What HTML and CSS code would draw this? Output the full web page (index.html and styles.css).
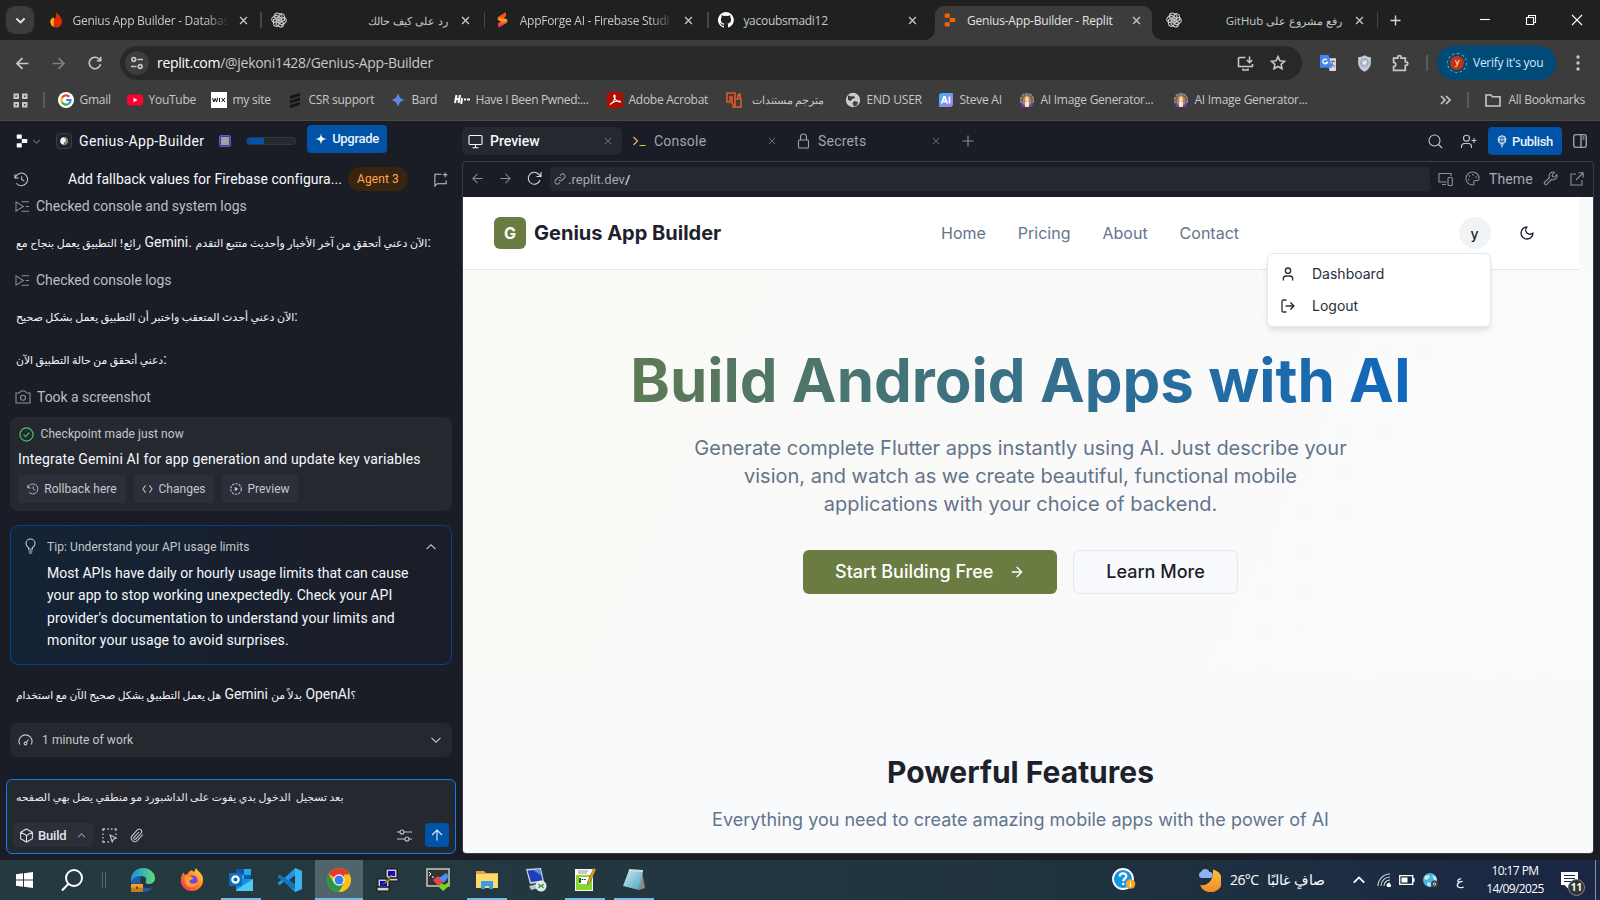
FILE: index.html
```html
<!DOCTYPE html>
<html lang="en">
<head>
<meta charset="utf-8">
<title>Genius-App-Builder - Replit</title>
<link rel="stylesheet" href="styles.css">
</head>
<body>
<svg class="defs" width="0" height="0" aria-hidden="true">
  <defs>
    <linearGradient id="g-flame" x1="0" x2="1"><stop offset="0" stop-color="#ffc400"/><stop offset=".45" stop-color="#ff9100"/><stop offset=".5" stop-color="#dd2c00"/><stop offset="1" stop-color="#dd2c00"/></linearGradient>
    <linearGradient id="g-studio" x1="0" y1="0" x2="0" y2="1"><stop offset="0" stop-color="#f4511e"/><stop offset=".3" stop-color="#f4511e"/><stop offset=".5" stop-color="#ffb300"/><stop offset=".75" stop-color="#f0405a"/><stop offset="1" stop-color="#e91e8c"/></linearGradient>
    <linearGradient id="g-bard" x1="0" x2="1"><stop offset="0" stop-color="#8c7ad8"/><stop offset="1" stop-color="#2f97ea"/></linearGradient>
    <linearGradient id="g-steve" x1="0" y1="0" x2="1" y2="1"><stop offset="0" stop-color="#35b5f5"/><stop offset="1" stop-color="#b07af5"/></linearGradient>
    <linearGradient id="g-edge" x1="0" x2="1"><stop offset="0" stop-color="#1b8fe0"/><stop offset="1" stop-color="#5fdc7a"/></linearGradient>
    <linearGradient id="g-fox" x1="1" y1="0" x2="0" y2="1"><stop offset="0" stop-color="#ffe14a"/><stop offset=".45" stop-color="#ff8a1f"/><stop offset="1" stop-color="#f5206b"/></linearGradient>
    <linearGradient id="g-moon" x1="0" y1="0" x2="0" y2="1"><stop offset="0" stop-color="#f8c63a"/><stop offset="1" stop-color="#f08a2c"/></linearGradient>
    <linearGradient id="g-note" x1="0" x2="1" y2="1"><stop offset="0" stop-color="#c9edf5"/><stop offset="1" stop-color="#4aa2bb"/></linearGradient>
    <symbol id="close" viewBox="0 0 10 10"><path d="M1.200 1.200l7.600 7.600M8.800 1.200L1.200 8.800"/></symbol>
    <symbol id="down" viewBox="0 0 12 12"><path d="M1.500 3.800L6 8.200l4.500-4.400"/></symbol>
    <symbol id="up" viewBox="0 0 12 12"><path d="M1.500 8.200L6 3.800l4.500 4.400"/></symbol>
    <symbol id="left" viewBox="0 0 12 12"><path d="M11.500 6H1M6 1L1 6l5 5"/></symbol>
    <symbol id="right" viewBox="0 0 12 12"><path d="M.5 6H11M6 1l5 5-5 5"/></symbol>
    <symbol id="plus" viewBox="0 0 12 12"><path d="M6 .5v11M.5 6h11"/></symbol>
    <symbol id="knot" viewBox="0 0 16 16"><g><path d="M8 8V3.200a2.900 2.900 0 0 1 5.500 1.300v3.600L8.200 11" id="kp"/><use href="#kp" transform="rotate(60 8 8)"/><use href="#kp" transform="rotate(120 8 8)"/><use href="#kp" transform="rotate(180 8 8)"/><use href="#kp" transform="rotate(240 8 8)"/><use href="#kp" transform="rotate(300 8 8)"/></g></symbol>
    <symbol id="history" viewBox="0 0 16 16"><path d="M1 2.500v4h4M1.300 6.300A6.700 6.700 0 1 1 2.500 12M8.200 4.500V8l2.800 1.800"/></symbol>
    <symbol id="logs" viewBox="0 0 16 14"><path d="M1 2v10l8-5zM7 2h8M11.500 7H15M7 12h8"/></symbol>
    <symbol id="replit" viewBox="0 0 12 14"><path stroke="none" d="M1.500.5H5a.8.8 0 0 1 .8.8v3.400H1.500a.8.8 0 0 1-.8-.8V1.300a.8.8 0 0 1 .8-.8zM5.800 4.900h4.700a.8.8 0 0 1 .8.8v2.600a.8.8 0 0 1-.8.8H5.800zM1.500 9.300h4.300v3.400a.8.8 0 0 1-.8.8H1.500a.8.8 0 0 1-.8-.8v-2.600a.8.8 0 0 1 .8-.8z"/></symbol>
    <symbol id="girl" viewBox="0 0 16 16"><circle cx="8" cy="8" r="6.500" fill="#75605f" stroke="#8fa3ab" stroke-width="1.100" stroke-dasharray="3 1"/><path d="M4 14c-1-4 0-11 4-11s5 7 4 11z" fill="#b98545"/><ellipse cx="8" cy="7.500" rx="1.800" ry="3" fill="#f5d9bd"/><path d="M6 10h4v5H6z" fill="#e9e4f5"/><path d="M2.500 11l2 4M13.500 11l-2 4" stroke="#6a3ae0" stroke-width="1.800"/><path d="M4.500 12l1.500 3M11.500 12L10 15" stroke="#c0392b"/></symbol>
  </defs>
</svg>

<div class="screen">
<header class="chrome">
  <div class="tabstrip">
    <button class="tabsearch"><svg class="i w2" width="11" height="11"><use href="#down"/></svg></button>
    <div class="tab"><svg class="fav" viewBox="0 0 16 16"><path fill="#dd2c00" d="M8.300.5C12 3.500 14 6.500 14 9.800A5.700 5.700 0 0 1 8 15.500z"/><path fill="url(#g-flame)" d="M8.300.5c.6 3-.6 4.500-1 6L4.500 5.500C3 7 2.300 8.500 2.300 10a5.700 5.700 0 0 0 8 5c-2-2-.5-8 0-10z"/></svg><span class="title fade">Genius App Builder - Databas</span><svg class="x" width="9" height="9"><use href="#close"/></svg></div>
    <div class="tab sep"><svg class="fav knot" viewBox="0 0 16 16"><use href="#knot"/></svg><span class="title rtl">رد على كيف حالك</span><svg class="x" width="9" height="9"><use href="#close"/></svg></div>
    <div class="tab sep"><svg class="fav" viewBox="0 0 16 16"><path fill="url(#g-studio)" d="M10.500.3L3.200 4.800c-1 .8-.8 3.200.6 3.700l2.200 1L3.500 11c-.8.5-.6 3 .3 4.700l8-5c1-.8.9-3-.5-3.600l-2.600-1 2-1.500c.7-.6.6-2.800-.2-4.300z"/></svg><span class="title fade">AppForge AI - Firebase Studi</span><svg class="x" width="9" height="9"><use href="#close"/></svg></div>
    <div class="tab sep"><svg class="fav" viewBox="0 0 16 16"><path fill="#fff" d="M8 0a8 8 0 0 0-2.500 15.600c.4.100.5-.2.500-.4v-1.500c-2.200.5-2.700-1-2.700-1-.4-.9-.9-1.200-.9-1.200-.7-.5.100-.5.100-.5.800.100 1.200.8 1.200.8.700 1.200 1.900.9 2.300.7.100-.5.300-.9.500-1.100-1.800-.2-3.600-.9-3.600-4 0-.9.300-1.600.8-2.100-.100-.2-.4-1 .100-2.100 0 0 .7-.2 2.200.8a7.500 7.500 0 0 1 4 0c1.500-1 2.200-.8 2.200-.8.5 1.100.2 1.900.100 2.100.5.600.8 1.300.8 2.100 0 3.100-1.900 3.800-3.700 4 .3.300.6.800.6 1.500v2.200c0 .2.100.5.600.4A8 8 0 0 0 8 0z"/></svg><span class="title">yacoubsmadi12</span><svg class="x" width="9" height="9"><use href="#close"/></svg></div>
    <div class="tab active"><svg class="fav" viewBox="-2 -1 16 16"><use href="#replit" width="12" height="14" fill="#f26207"/></svg><span class="title">Genius-App-Builder - Replit</span><svg class="x" width="9" height="9"><use href="#close"/></svg></div>
    <div class="tab last"><svg class="fav knot" viewBox="0 0 16 16"><use href="#knot"/></svg><span class="title rtl">رفع مشروع على GitHub</span><svg class="x" width="9" height="9"><use href="#close"/></svg></div>
    <svg class="i w15 newtab" width="11" height="11"><use href="#plus"/></svg>
    <div class="winctl">
      <svg class="i" width="12" height="12" viewBox="0 0 12 12"><path d="M1 5.500h10"/></svg>
      <svg class="i" width="12" height="12" viewBox="0 0 12 12"><path d="M1.500 3.500h7v7h-7zM3.500 3.500v-2h7v7h-2"/></svg>
      <svg class="i" width="12" height="12" viewBox="0 0 12 12"><path d="M1 1l10 10M11 1L1 11"/></svg>
    </div>
  </div>

  <div class="toolbar">
    <svg class="i w15 nav" width="13" height="13"><use href="#left"/></svg>
    <svg class="i w15 nav dim" width="13" height="13"><use href="#right"/></svg>
    <svg class="i w15 nav" width="14" height="14" viewBox="0 0 14 14"><path d="M12.500 8.200A5.700 5.700 0 1 1 11 3l1.500 1.500M12.700.8v4H8.800"/></svg>
    <div class="omnibox">
      <span class="chip"><svg class="i w15" width="14" height="14" viewBox="0 0 14 14"><circle cx="3.800" cy="3.500" r="1.900"/><path d="M7.500 3.500H13M1 10.500h5.500"/><circle cx="10.200" cy="10.500" r="1.900"/></svg></span>
      <span class="url"><b>replit.com</b>/@jekoni1428/Genius-App-Builder</span>
      <svg class="i w15" width="17" height="15" viewBox="0 0 17 15"><path d="M8.500 1.500h-6a1 1 0 0 0-1 1v8h14V8M12.500.5v6M9.800 4l2.700 2.700L15.200 4M6 12.500v1.500h5v-1.500"/></svg>
      <svg class="i w15" width="16" height="16" viewBox="0 0 16 16"><path d="M8 1.700l1.900 4.100 4.500.5-3.300 3 .9 4.500L8 11.500l-4 2.300.9-4.500-3.300-3 4.500-.5z"/></svg>
    </div>
    <svg class="ext" viewBox="0 0 16 16"><path fill="#ddd" d="M7 3h8v12H9z"/><path fill="#4285f4" d="M0 0h8l3.500 12H0z"/><path d="M10 6h4M12 5v1c0 2-1 4-2 5M11 8c.5 1.500 2 2.500 3 3" stroke="#68819c" fill="none"/><path d="M6.500 4.500A2.200 2.200 0 1 0 7 7H5" stroke="#fff" stroke-width="1.300" fill="none"/></svg>
    <svg class="ext" viewBox="0 0 16 16"><path fill="#c3cad6" d="M8 .3c2 1.200 4 1.700 6 1.700v5c0 4-2.500 7-6 8.700C4.500 14 2 11 2 7V2c2 0 4-.5 6-1.700z"/><circle cx="8" cy="7.200" r="3.400" stroke="#8994a8" fill="none"/><path d="M9.500 5.800l-1.700 2-1.300-.8" stroke="#fff" fill="none"/></svg>
    <svg class="ext i w15" viewBox="0 0 16 16"><path d="M1.500 3h4V2a1.500 1.500 0 0 1 3 0v1h4v3.500h.7a1.500 1.500 0 0 1 0 3.200h-.7V14.500h-11v-3.500a2 2 0 0 0 0-4z"/></svg>
    <span class="vbar"></span>
    <div class="verify"><span class="ava">y</span>Verify it's you</div>
    <svg class="dots" width="4" height="16" viewBox="0 0 4 16"><circle cx="2" cy="2" r="1.700"/><circle cx="2" cy="8" r="1.700"/><circle cx="2" cy="14" r="1.700"/></svg>
  </div>

  <div class="bookmarks">
    <svg class="i w2 apps" width="15" height="15" viewBox="0 0 15 15"><path d="M1.500 1.500h3.500v3.500H1.500zM10 1.500h3.500v3.500H10zM1.500 10h3.500v3.500H1.500zM10 10h3.500v3.500H10z"/></svg>
    <span class="vbar first"></span>
    <a class="bm b1"><svg viewBox="0 0 16 16"><circle cx="8" cy="8" r="8" fill="#fff"/><g fill="none" stroke-width="2.200"><path stroke="#ea4335" d="M4 5.700A4.600 4.600 0 0 1 11.300 4.700"/><path stroke="#fbbc05" d="M4.100 10.400a4.600 4.600 0 0 1 0-4.800"/><path stroke="#34a853" d="M11 11.500a4.600 4.600 0 0 1-7-1.200"/><path stroke="#4285f4" d="M8 8h4.600a4.600 4.600 0 0 1-1.600 3.500"/></g></svg>Gmail</a>
    <a class="bm b2"><svg viewBox="0 0 16 16"><rect y="2.500" width="16" height="11" rx="3" fill="#f03"/><path fill="#fff" d="M6.500 5.700v4.600l4-2.300z"/></svg>YouTube</a>
    <a class="bm b3"><svg viewBox="0 0 16 16"><path fill="#fff" d="M0 0h16v16H0z"/><path d="M1.500 6l1.200 4L4.200 6.500 5.500 10l1.200-4M8.500 6v4M10.500 6l3.500 4M14 6l-3.500 4" stroke="#111" fill="none"/></svg>my site</a>
    <a class="bm b4"><svg viewBox="0 0 16 16"><path d="M3 4l10-3v3L3 7zM3 8.500l10-3v3l-10 3zM3 13l10-3v3L3 16z" fill="#151515"/></svg>CSR support</a>
    <a class="bm b5"><svg viewBox="0 0 16 16"><path fill="url(#g-bard)" d="M8 1c.8 4 3 6.200 7 7-4 .8-6.200 3-7 7-.8-4-3-6.200-7-7 4-.8 6.200-3 7-7z"/></svg>Bard</a>
    <a class="bm b6"><svg viewBox="0 0 16 16"><path d="M2.500 3L1 11M6 3L4.500 11M2 7h3.500M7 7.500h1.500M10 7.500h2M13 7.500h3M8 6l-.8 6" stroke="#fff" stroke-width="2" fill="none"/></svg>Have I Been Pwned:...</a>
    <a class="bm b7"><svg viewBox="0 0 16 16"><rect width="16" height="16" rx="3" fill="#b30b00"/><path d="M3 12.500c2.500-1.500 5-5 5-8.500 0-1.500-1.500-1-1 .5.800 3 3.500 5.500 6 5.500 1 0 .5-1-1-1-3 0-6.500 1.200-9 3.500z" stroke="#fff" fill="none" stroke-width="1.200"/></svg>Adobe Acrobat</a>
    <a class="bm b8"><svg viewBox="0 0 16 16"><path d="M1 1h8v13l-3-2.500V5H4v5H1zM9 14V7h3V3l2-1v5h1v8H6" stroke="#e8572a" stroke-width="1.500" fill="none"/></svg>مترجم مستندات</a>
    <a class="bm b9"><svg viewBox="0 0 16 16"><circle cx="8" cy="8" r="7.200" fill="#c8cbd0"/><path d="M3 3.500l3.500 1L9 4l1 2-3 1-1 2-3-1M9 9l4 1-1 3-3 1.500-1.500-3zM11 2l2.500 3" fill="#3c3c3c"/></svg>END USER</a>
    <a class="bm b10"><svg viewBox="0 0 16 16"><path fill="url(#g-steve)" d="M4 1h11v11a3 3 0 0 1-3 3H1V4a3 3 0 0 1 3-3z"/><path d="M3.500 11.500L6 4.800h.8l2.500 6.700M4.500 9.300h4M11.500 4.500v7" stroke="#fff" stroke-width="1.700" fill="none"/></svg>Steve AI</a>
    <a class="bm b11"><svg><use href="#girl"/></svg>AI Image Generator...</a>
    <a class="bm b12"><svg><use href="#girl"/></svg>AI Image Generator...</a>
    <svg class="i w15 more" width="11" height="10" viewBox="0 0 11 10"><path d="M1 1l4 4-4 4M6 1l4 4-4 4"/></svg>
    <span class="vbar"></span>
    <a class="bm all"><svg class="i w15" viewBox="0 0 16 16"><path d="M1 3h5l1.500 1.800H15V14H1z"/></svg>All Bookmarks</a>
  </div>
</header>

<main class="ide">
  <aside class="agent">
    <div class="apphead">
      <svg class="logo" width="12" height="14"><use href="#replit" fill="#fff"/></svg>
      <svg class="i chev" width="9" height="9"><use href="#down"/></svg>
      <span class="appicon"><svg width="8" height="8" viewBox="0 0 8 8"><circle cx="4" cy="4" r="3.800" fill="#f2f2f2"/><path d="M4 .2a3.800 3.800 0 0 1 0 7.600z" fill="#777"/><path d="M2.500 2.500L5.500 1v5z" fill="#fff"/></svg></span>
      <span class="appname">Genius-App-Builder</span>
      <span class="stop"></span>
      <span class="meter"><i></i></span>
      <button class="btn upgrade"><svg width="12" height="12" viewBox="0 0 12 12"><path fill="#fff" d="M6 0c.3 4.200 1.800 5.700 6 6-4.200.3-5.700 1.800-6 6-.3-4.200-1.800-5.700-6-6 4.200-.3 5.700-1.800 6-6z"/></svg>Upgrade</button>
    </div>
    <div class="chathead">
      <svg class="i" width="15" height="15"><use href="#history"/></svg>
      <span class="chattitle">Add fallback values for Firebase configura...</span>
      <span class="badge">Agent 3</span>
      <svg class="i" width="15" height="15" viewBox="0 0 16 16"><path d="M9 2.500H2v12.500l2.500-2.500H14V9M13 .500v5M10.500 3h5"/></svg>
    </div>
    <div class="feed">
      <div class="log"><svg class="i" width="15" height="13"><use href="#logs"/></svg><span>Checked console and system logs</span></div>
      <p class="msg m1"><span class="ar">رائع! التطبيق يعمل بنجاح مع</span> Gemini. <span class="ar">الآن دعني أتحقق من آخر الأخبار وأحديث متتبع التقدم</span>:</p>
      <div class="log l2"><svg class="i" width="15" height="13"><use href="#logs"/></svg><span>Checked console logs</span></div>
      <p class="msg m2"><span class="ar">الآن دعني أحدث المتعقب واختبر أن التطبيق يعمل بشكل صحيح</span>:</p>
      <p class="msg m3"><span class="ar">دعني أتحقق من حالة التطبيق الآن</span>:</p>
      <div class="log l3"><svg class="i" width="16" height="14" viewBox="0 0 16 14"><path d="M1 3h3.500L6 1h4l1.500 2H15v10H1z"/><circle cx="8" cy="7.700" r="2.500"/></svg><span>Took a screenshot</span></div>

      <section class="card checkpoint">
        <div class="ckhead"><svg width="15" height="15" viewBox="0 0 16 16"><circle cx="8" cy="8" r="7" /><path d="M5 8.200l2 2L11 6"/></svg><span>Checkpoint made just now</span></div>
        <div class="cktext">Integrate Gemini AI for app generation and update key variables</div>
        <div class="ckbtns">
          <button class="soft s1"><svg class="i" width="12" height="12"><use href="#history"/></svg>Rollback here</button>
          <button class="soft s2"><svg class="i" width="11" height="10" viewBox="0 0 12 10"><path d="M4 1L1 5l3 4M8 1l3 4-3 4"/></svg>Changes</button>
          <button class="soft s3"><svg class="i" width="12" height="12" viewBox="0 0 12 12"><circle cx="6" cy="6" r="5.300" stroke-dasharray="2.200 1.200"/><path d="M4.800 3.800v4.400L8.300 6z" fill="currentColor" stroke="none"/></svg>Preview</button>
        </div>
      </section>

      <section class="tip">
        <svg class="i bulb" width="11" height="16" viewBox="0 0 11 16"><path d="M3.500 11V9.500C2 8.500 1 7.200 1 5.500a4.500 4.500 0 0 1 9 0c0 1.700-1 3-2.500 4V11zM3.500 13h4M3.800 15h3.400"/></svg>
        <div class="tipbody">
          <div class="tiphead">Tip: Understand your API usage limits</div>
          <div class="tiptext"><span>Most APIs have daily or hourly usage limits that can cause</span><br>your app to stop working unexpectedly. Check your API<br>provider's documentation to understand your limits and<br>monitor your usage to avoid surprises.</div>
        </div>
        <svg class="i tipchev" width="12" height="12"><use href="#up"/></svg>
      </section>

      <p class="msg m4"><span class="ar">هل يعمل التطبيق بشكل صحيح الآن مع استخدام</span> Gemini <span class="ar">بدلاً من</span> OpenAI<span class="ar">؟</span></p>

      <section class="card work"><svg class="i" width="15" height="12" viewBox="0 0 15 12"><path d="M2 10.500A6.200 6.200 0 0 1 .9 7.500 6.600 6.600 0 0 1 14.100 7.500 6.200 6.200 0 0 1 13 10.500M8.200 8.500l2.300-3"/><circle cx="7.500" cy="9.500" r="1.400"/></svg><span>1 minute of work</span><svg class="i" width="12" height="12"><use href="#down"/></svg></section>
    </div>

    <div class="composer">
      <p class="draft" dir="ltr"><span class="ar">بعد تسجيل &nbsp;الدخول بدي يفوت على الداشبورد مو منطقي يضل بهي الصفحه</span></p>
      <div class="tools">
        <button class="build"><svg class="i" width="15" height="15" viewBox="0 0 16 16"><path d="M8 1l6.300 3.500v7L8 15l-6.300-3.500v-7zM1.700 4.500L8 8l6.300-3.500M8 8v7"/></svg>Build<svg class="i c" width="9" height="9"><use href="#up"/></svg></button>
        <svg class="i" width="15" height="15" viewBox="0 0 15 15"><path d="M1 3V1h2M5.500 1h1.500M9 1h1.500M12.500 1H14v2M1 5.500V7M1 9v1.500M1 12.500V14h2M5.500 14H7M14 5.500V7" stroke-width="1.300"/><path d="M8 7l6.500 3-3 1-1.300 3z"/></svg>
        <svg class="i clip" width="14" height="15" viewBox="0 0 14 15"><path d="M12.800 6.500l-5.500 6.200a3.600 3.600 0 0 1-5.300-4.800l5.500-6.200a2.500 2.500 0 0 1 3.700 3.300L6 10.800a1.200 1.200 0 0 1-1.800-1.600L9 4"/></svg>
        <svg class="i sliders" width="15" height="13" viewBox="0 0 15 13"><path d="M0 3h3M7 3h8M0 10h8M12 10h3"/><circle cx="5" cy="3" r="2"/><circle cx="10" cy="10" r="2"/></svg>
        <button class="send"><svg class="i" width="12" height="12" viewBox="0 0 12 12"><path d="M6 11.500V1M1 6l5-5 5 5"/></svg></button>
      </div>
    </div>
  </aside>

  <section class="pane">
    <div class="ptabs">
      <div class="ptab on"><svg class="i" width="15" height="15" viewBox="0 0 15 15"><rect x="1" y="1.500" width="13" height="9" rx="1"/><path d="M7.500 10.500V13.500M4.500 13.700h6"/></svg><span>Preview</span><svg class="i px" width="8" height="8"><use href="#close"/></svg></div>
      <div class="ptab"><svg class="i con" width="15" height="15" viewBox="0 0 15 15"><path d="M1.500 3l4 4-4 4M7.500 11.500h6"/></svg><span>Console</span><svg class="i px" width="8" height="8"><use href="#close"/></svg></div>
      <div class="ptab"><svg class="i" width="15" height="16" viewBox="0 0 15 16"><rect x="2.500" y="7" width="10" height="8" rx="1"/><path d="M4.500 7V4a3 3 0 0 1 6 0v3"/></svg><span>Secrets</span><svg class="i px" width="8" height="8"><use href="#close"/></svg></div>
      <svg class="i addt" width="12" height="12"><use href="#plus"/></svg>
      <div class="pright">
        <svg class="i" width="15" height="15" viewBox="0 0 15 15"><circle cx="6.500" cy="6.500" r="5.500"/><path d="M10.500 10.500L14 14"/></svg>
        <svg class="i" width="17" height="15" viewBox="0 0 17 15"><circle cx="6.500" cy="4.200" r="3"/><path d="M1.500 14v-1.500a3 3 0 0 1 3-3h4a3 3 0 0 1 3 3V14M14 4v5M11.500 6.500h5"/></svg>
        <button class="btn publish"><svg class="i" width="10" height="13" viewBox="0 0 11 14"><circle cx="5.500" cy="5" r="4.300"/><path stroke-width=".8" d="M1.200 5h8.600M5.500.7v8.600M3.600 1.500c-1 2-1 5 0 7M7.400 1.500c1 2 1 5 0 7M5.500 9v5M3.800 10l1.700 2 1.700-2"/></svg>Publish</button>
        <svg class="i" width="14" height="14" viewBox="0 0 14 14"><rect x=".8" y=".8" width="12.400" height="12.400" rx="1.500"/><path d="M8 1v12M9.500 3h2M9.500 5h2"/></svg>
      </div>
    </div>

    <div class="webview">
      <div class="wbar">
        <svg class="i" width="11" height="11"><use href="#left"/></svg>
        <svg class="i" width="11" height="11"><use href="#right"/></svg>
        <svg class="i lite" width="15" height="15" viewBox="0 0 15 15"><path d="M13 9A6 6 0 1 1 11.500 3L14 5.500M14 1v4.500H9.500"/></svg>
        <div class="waddr"><svg class="i" width="12" height="12" viewBox="0 0 12 12"><path d="M5 7a2.300 2.300 0 0 0 3.300 0l2-2A2.300 2.300 0 0 0 7 1.700L6 2.700M7 5a2.300 2.300 0 0 0-3.300 0l-2 2A2.300 2.300 0 0 0 5 10.300l1-1"/></svg><span>.replit.dev<b>/</b></span></div>
        <svg class="i" width="15" height="14" viewBox="0 0 15 14"><path d="M8.500 10H1V1.500h12V4M4 12.500h4"/><rect x="10" y="5.500" width="4.300" height="8" rx="1"/></svg>
        <svg class="i pal" width="15" height="15" viewBox="0 0 15 15"><path d="M7.500 1a6.500 6.500 0 0 0 0 13c1.500 0 1.700-1 1.300-1.800-.5-1.200 0-2.700 1.700-2.700h2c1 0 1.500-1 1.500-2C14 3.500 11 1 7.500 1z"/><path d="M4.500 5v.1M8 3.800v.1M11 6v.1M3.800 8.500v.1" stroke-linecap="round" stroke-width="1.600"/></svg>
        <span class="theme">Theme</span>
        <svg class="i" width="15" height="15" viewBox="0 0 15 15"><path d="M9.300 3.800a.8.800 0 0 0 0 1.200l1 1a.8.800 0 0 0 1.200 0L13.800 3.500a4 4 0 0 1-5.300 5L4 13.200a1.500 1.500 0 0 1-2.200-2.200L6.500 6.500a4 4 0 0 1 5-5.300z"/></svg>
        <svg class="i" width="14" height="14" viewBox="0 0 14 14"><path d="M6 2H1v11h11V8M8.500.8h4.700v4.700M13 1L6 8"/></svg>
      </div>

      <div class="page">
        <nav class="site">
          <span class="g">G</span><span class="brand">Genius App Builder</span>
          <div class="links"><a>Home</a><a>Pricing</a><a>About</a><a>Contact</a></div>
          <span class="user">y</span>
          <svg class="i moon" width="16" height="16" viewBox="0 0 24 24"><path d="M12 3a6 6 0 0 0 9 9 9 9 0 1 1-9-9Z"/></svg>
          <div class="menu">
            <a><svg class="i" width="16" height="16" viewBox="0 0 24 24"><path d="M19 21v-2a4 4 0 0 0-4-4H9a4 4 0 0 0-4 4v2"/><circle cx="12" cy="7" r="4"/></svg>Dashboard</a>
            <a><svg class="i" width="16" height="16" viewBox="0 0 24 24"><path d="M9 21H5a2 2 0 0 1-2-2V5a2 2 0 0 1 2-2h4M16 17l5-5-5-5M21 12H9"/></svg>Logout</a>
          </div>
        </nav>
        <section class="hero">
          <h1>Build Android Apps with AI</h1>
          <p>Generate complete Flutter apps instantly using AI. Just describe your vision, and watch as we create beautiful, functional mobile applications with your choice of backend.</p>
          <div class="cta">
            <a class="primary">Start Building Free<svg class="i" width="16" height="16" viewBox="0 0 24 24"><path d="M5 12h14M12 5l7 7-7 7"/></svg></a>
            <a class="ghost">Learn More</a>
          </div>
        </section>
        <section class="features">
          <h2>Powerful Features</h2>
          <p>Everything you need to create amazing mobile apps with the power of AI</p>
        </section>
      </div>
    </div>
  </section>
</main>

<footer class="taskbar">
  <span class="tsys"><svg width="17" height="16" viewBox="0 0 17 16"><path fill="#fff" d="M0 2.300l7-1v6.200H0zM8 1.200L17 0v7.500H8zM0 8.500h7v6.200l-7-1zM8 8.500h9V16l-9-1.200z"/></svg></span>
  <span class="tsys"><svg class="i w2" width="24" height="24" viewBox="0 0 24 24"><circle cx="14" cy="10" r="8"/><path d="M8.500 15.800L2 22.500"/></svg></span>
  <span class="grip"></span>
  <span class="task"><svg viewBox="0 0 24 24"><path fill="url(#g-edge)" d="M0 12C0 4 6 0 12 0c7 0 12 5 12 10 0 4-3 6-6.500 6-2.500 0-3.500-1.500-2.500-3C16 11 14.500 8 10.500 8 6 8 2 11 0 15z"/><path fill="#155fb5" d="M10.500 8C3 8 0 12 1 16c1 5 6 8 11 8 4 0 8-2 9.500-5-4 2-10 2-12-3-1-3 0-6 1-8z"/><path fill="#c97a1a" d="M0 16h12v8H0z"/><path fill="#f0a030" d="M0 16h12v3.500H0z"/><path fill="#7a4208" d="M5 18.500h2v2.500H5zM4 14.500h4V16H4z"/></svg></span>
  <span class="task"><svg viewBox="0 0 24 24"><path fill="url(#g-fox)" d="M3.500 4.500L5 7l3-1.500c1-2.500 3-3 4-3L14 4l2-4c1.500 3 6 5 7 10 1 7-4 13-11 13S.5 18 .8 12c0-3 1-5.500 2.700-7.500z"/><circle cx="12.500" cy="12.500" r="5" fill="#7a3df0"/><path fill="#ff9d2e" d="M5 8l6 .5 2.500 2c-1 1.500-4 1-4 3 1 3 6 3 8 0-.5 5-5 6.500-8 5.500C5.500 18 4 13 5 8z"/></svg></span>
  <span class="task open"><svg viewBox="0 0 24 24"><path fill="#28a8ea" d="M7 1h15v12H7z"/><path fill="#0a5ca8" d="M7 1h8v6H7zM15 7h7v6h-7z"/><path fill="#1490df" d="M7 11l17 0v12H7z"/><path fill="#50c8f5" d="M7 22L24 11v12H8z"/><rect y="5" width="13" height="13" rx="1" fill="#0f6cbd"/><circle cx="6.500" cy="11.500" r="3.200" stroke="#fff" stroke-width="2.200" fill="none"/></svg></span>
  <span class="task"><svg viewBox="0 0 24 24"><path fill="#2196e3" d="M17 0l7 3v18l-7 3L6 13.500 2 17 0 16v-1.500L3.500 12 0 9.500V8l2-1 4 3.500zM17.500 7L11 12l6.500 5z"/><path fill="#1173bd" d="M2 7L0 8v1.500L17.500 22.500V17z"/><path fill="#3db2f5" d="M17 0l7 3v18l-7 3z"/></svg></span>
  <span class="task current"><svg viewBox="0 0 24 24"><circle cx="12" cy="12" r="12" fill="#fbc116"/><path fill="#e33b2e" d="M12 12L1.600 6A12 12 0 0 1 22.400 6z"/><path fill="#24994a" d="M12 24A12 12 0 0 1 1.600 6L7 15z"/><path fill="#24994a" d="M12 24l5-9H7l1 3z"/><path fill="#fbc116" d="M12 24l5.500-9L17 6.500h5.400A12 12 0 0 1 12 24z"/><circle cx="12" cy="12" r="5.700" fill="#fff"/><circle cx="12" cy="12" r="4.500" fill="#3a7df0"/></svg></span>
  <span class="task"><svg viewBox="0 0 24 24"><path fill="#cfcfcf" stroke="#111" d="M10 1h11v9H10zM11 10h11v3H11zM2 11h11v8H2zM1 19h12v4H1z"/><path fill="#10d" d="M12 3h7v5h-7zM4 13h7v5H4z"/><path fill="#ff0" stroke="#330" stroke-width=".5" d="M18 5l-7 5 2 1.500L5 17l9-4-2-1.500z"/></svg></span>
  <span class="task"><svg viewBox="0 0 24 24"><path fill="#333" stroke="#c8c8c8" stroke-width="1.500" d="M1 1h22v17H1z"/><path d="M3 4l2 2-2 2M6 9h2" stroke="#fff" fill="none"/><path fill="#e8434a" d="M7 12l5-4 3 3 2 3-5 4z"/><path fill="#4a8df0" d="M13 10l7-5 3 3-5 7z"/><path fill="#7ed321" d="M12 18l4-3 2 2 5-3v4l-6 5z"/></svg></span>
  <span class="task open"><svg viewBox="0 0 24 24"><path fill="#e8a33a" d="M1 3h8l2 2h12v4H1z"/><path fill="#ffd869" d="M1 6h22v14H1z"/><path fill="#3a9be8" d="M6 13h12v8h-4v-3h-4v3H6z"/></svg></span>
  <span class="task"><svg viewBox="0 0 24 24"><path fill="#cdd6e4" d="M2 1l15-1 3 14-14 2z"/><path fill="#1b3fb8" d="M3.500 2.500l12.500-1 2.500 11L7 14z"/><path fill="#5d8df5" d="M9 2l7-.5 1.500 6z"/><path fill="#b9c2cf" d="M5 18l8-2 2 4-8 2z"/><circle cx="17" cy="18" r="5.500" fill="#e4e8e6"/><path d="M14.500 16l2 2-2 2M19.500 16l-2 2 2 2" stroke="#2b9348" fill="none" stroke-width="1.300"/></svg></span>
  <span class="task open"><svg viewBox="0 0 24 24"><path fill="#f8f8f4" d="M2 1h18v22H2z"/><path fill="#86d62c" d="M3 7h16v15H3z"/><path d="M5 3h10M5 5h9" stroke="#999"/><path fill="#fff" d="M6 9h10v7H6z"/><path d="M7 10v5M9.500 11v1M12 11v1" stroke="#111" stroke-width="1.500"/><path fill="#f0a52a" stroke="#6a4a10" stroke-width=".6" d="M21 0l2 1.500L16.500 15l-2 1.500V14z"/></svg></span>
  <span class="task open"><svg viewBox="0 0 24 24"><path fill="#8a8a80" d="M20 3l3 17-6 2z"/><path fill="url(#g-note)" d="M7 2l14 1-4 19-16-4z"/><path d="M7 2l14 1" stroke="#d8d8d8" stroke-width="2"/></svg></span>

  <div class="tray">
    <span class="help"><svg width="24" height="24" viewBox="0 0 24 24"><circle cx="11" cy="11" r="10" fill="#1296e0" stroke="#fff" stroke-width="1.800"/><path d="M7.800 8.500c0-4 6.500-4 6.500-.3 0 2.300-3 2.300-3 5M11.200 15v2" stroke="#fff" stroke-width="2.300" fill="none"/><circle cx="18.500" cy="16" r="4.800" fill="#f5a623"/><path d="M18.500 13.200v1M18.500 15.200v3.500" stroke="#fff" stroke-width="1.400"/></svg></span>
    <svg class="weather" width="24" height="24" viewBox="0 0 24 24"><path fill="url(#g-moon)" d="M16 1.500A11.500 11.500 0 1 1 3 17c6 1.500 14-3 13-15.500z"/><path fill="#8fb3f2" d="M4 10a3.500 3.500 0 0 1 .3-6.500A4.500 4.500 0 0 1 12.500 4a3 3 0 0 1 .5 6z"/></svg>
    <span class="temp">26°C</span><span class="cond">صافٍ غالبًا</span>
    <svg class="i w15 t1" width="14" height="14"><use href="#up"/></svg>
    <svg class="i t2" width="14" height="14" viewBox="0 0 14 14"><path d="M1 13A12 12 0 0 1 13 1M4 13a9 9 0 0 1 9-9M7 13a6 6 0 0 1 6-6" opacity=".8"/><path d="M10 13a3 3 0 0 1 3-3"/><circle cx="12" cy="12.500" r="1.500" fill="#fff"/></svg>
    <svg class="t3" width="16" height="10" viewBox="0 0 16 10"><path d="M.7.7h13v8.600H.7z" stroke="#fff" stroke-width="1.300" fill="none"/><path d="M2.500 2.500h6v5h-6zM14 3h1.500v4H14z" fill="#fff"/></svg>
    <svg class="t4" width="15" height="15" viewBox="0 0 15 15"><circle cx="7" cy="7" r="7" fill="#48b7dc"/><path d="M2 3l4-1 1 2-3 3-3-1zM9 2l4 2 1 4-3-1zM5 9l3 1-1 4-3-2z" fill="#bfeaf5"/><circle cx="11.500" cy="11" r="3.500" fill="#444"/><circle cx="11.500" cy="11" r="1.200" stroke="#ccc" fill="none"/></svg>
    <span class="lang">ع</span>
    <span class="clock">10:17 PM<br>14/09/2025</span>
    <span class="notif"><svg width="17" height="17" viewBox="0 0 17 17"><path fill="#fff" d="M0 0h17v13H7v3.500L3.500 13H0z"/><path d="M3 3.500h11M3 6.500h11M3 9.500h7" stroke="#1c2840" stroke-width="1.200"/></svg><b>11</b></span>
    <span class="desk"></span>
  </div>
</footer>
</div>
</body>
</html>
```
FILE: styles.css
```css
*{box-sizing:border-box}
body{margin:0;font-family:Roboto,"Liberation Sans",sans-serif;overflow:hidden}
p,h1,h2{margin:0}
button{border:0;padding:0;font:inherit;color:inherit;background:none;display:flex;align-items:center}
svg{flex:none;display:block}
.defs{position:absolute}
.screen{width:1600px;height:900px;display:flex;flex-direction:column;background:#1b1d26}
.i{fill:none;stroke:currentColor;stroke-width:1.1}
.w15{stroke-width:1.6}
.w2{stroke-width:2}

/* browser chrome */
.chrome{height:121px;flex:none;background:#3c3c3c;border-bottom:1px solid #484c48;color:#c7c7c7;font:12px/16px "Open Sans","Noto Sans",sans-serif;letter-spacing:-.27px}
.tabstrip{height:40px;background:#1f2120;display:flex;align-items:center;padding-left:6px}
.tabsearch{width:28px;height:28px;border-radius:9px;background:#3c3c3c;justify-content:center;color:#e3e3e3;margin-right:2.600px}
.tab{width:223.600px;height:34px;margin-top:6px;padding:0 14px 6px 11px;display:flex;align-items:center;position:relative}
.tab.sep::before,.tab.last::after{content:"";position:absolute;left:0;top:6px;width:1.500px;height:16px;background:#444746}
.tab.last::after{left:auto;right:0}
.fav{width:16px;height:16px;margin-right:9px}
.knot{fill:none;stroke:#c9c9c9;stroke-width:1.100}
.title{flex:1;white-space:nowrap;margin-right:16px;padding-top:1px}
.title.rtl{direction:rtl;font-size:11.400px;letter-spacing:0;margin-right:13px}
.fade{-webkit-mask-image:linear-gradient(90deg,#000 85%,transparent);mask-image:linear-gradient(90deg,#000 85%,transparent);margin-right:10px}
.x{stroke:#c7c7c7;stroke-width:1.500;margin-left:auto;margin-right:0}
.tab.active{color:#e3e3e3;z-index:0;letter-spacing:-.2px}
.tab.active::before{content:"";position:absolute;z-index:-1;left:4px;top:0;width:217px;height:34px;background:#3c3c3c;border-radius:9px 9px 0 0}
.tab.active::after{content:"";position:absolute;z-index:-1;left:-6px;bottom:0;width:237px;height:10px;background:radial-gradient(circle at 0 0,transparent 9.500px,#3c3c3c 10px) 0 0/10px 10px no-repeat,radial-gradient(circle at 100% 0,transparent 9.500px,#3c3c3c 10px) 100% 0/10px 10px no-repeat}
.newtab{margin-left:12px;color:#d5d5d5}
.winctl{margin-left:auto;margin-right:17px;display:flex;gap:34px;color:#fff}
.toolbar{height:46px;padding:0 20px 0 16px;display:flex;align-items:center}
.nav{margin-right:23px}
.nav.dim{color:#7d7d7d}
.nav:nth-child(3){margin-right:18px}
.omnibox{width:1182px;height:34px;border-radius:17px;background:#282828;display:flex;align-items:center;padding:0 16px 0 5px;gap:16px}
.chip{width:24px;height:24px;border-radius:50%;background:#3c3c3c;display:flex;align-items:center;justify-content:center}
.url{flex:1;font-size:14px;letter-spacing:-.28px;margin-left:-8px}
.url b{font-weight:400;color:#fff}
.ext{width:17px;height:17px;margin-left:19px}
.omnibox + .ext{margin-left:18px}
.vbar{width:2px;height:16px;background:#5a5a5a;margin:0 9px 0 17px}
.verify{height:34px;width:119px;border-radius:17px;background:#004a77;color:#d3e8fd;display:flex;align-items:center;padding-left:11px;gap:7px}
.ava{width:18px;height:18px;border-radius:50%;background:#c2330f;color:#fff;border:2px solid #004a77;outline:1px dashed #8aa;font-size:9px;line-height:12px;text-align:center}
.dots{margin-left:auto;fill:#c7c7c7}
.bookmarks{height:34px;margin-top:-3px;display:flex;align-items:center;padding-left:12.500px}
.vbar.first{margin:0 13px 0 15px}
.bm{display:flex;align-items:center;gap:6px;white-space:nowrap}
.bm svg{width:16px;height:16px}
.b1{width:69px}.b2{width:84px}.b3{width:76px}.b4{width:103px}.b5{width:64px}.b6{width:153px;letter-spacing:-.34px}.b7{width:119px}.b8{width:119px;gap:10px;letter-spacing:0;font-size:11.400px}.b9{width:93px;letter-spacing:-.2px}.b10{width:81px}.b11,.b12{width:154px}
.more{margin-left:113px}
.bookmarks .vbar:not(.first){margin:0 16px}
.all{gap:8px}

/* workspace */
.ide{flex:1;display:flex;min-height:0;color:#c2c8cc;font-size:14px}
.agent{width:462px;flex:none;display:flex;flex-direction:column}
.apphead{height:40px;display:flex;align-items:center;padding-left:16px}
.logo{margin-right:1px}
.chev{margin:0 15px 0 3px;color:#a5aab2}
.appicon{width:16px;height:16px;border:1px solid #3a3d48;border-radius:4px;display:flex;align-items:center;justify-content:center;background:#22242d}
.appname{color:#f5f9fc;margin-left:7px;letter-spacing:.36px;width:140px}
.stop{width:12px;height:12px;border:1px solid #6b4fd8;border-radius:2px;background:#9da2a6;box-shadow:inset 0 0 0 1px #4a3f86}
.meter{width:50px;height:8px;border-radius:4px;border:1px solid #353843;margin-left:15px;background:#262830;display:flex}
.meter i{width:17px;background:#0053a6;border-radius:3px 0 0 3px}
.btn{background:#0053a6;color:#e8f2fc;font-size:13px;font-weight:500;height:28px;border-radius:4px;justify-content:center}
.upgrade{width:80px;margin:-4px 0 0 11px;gap:5px;letter-spacing:-.3px;padding-bottom:1px}
.chathead{height:36px;display:flex;align-items:center;padding:0 14px 0 14px}
.chattitle{color:#f5f9fc;margin-left:39px;width:280px;white-space:nowrap;letter-spacing:.03px}
.badge{width:60px;height:24px;border-radius:12px;background:#38240f;color:#ffa657;font-size:12px;line-height:25px;text-align:center;letter-spacing:.1px;margin-right:25px}
.feed{padding-left:10px;width:452px}
.log{display:flex;align-items:center;height:20px;padding-left:5px;gap:6px;color:#b9bfc4;letter-spacing:-.04px}
.log svg{color:#8b8f98}
.log:first-child{margin-top:-1px}
.msg{height:20px;line-height:20px;padding-left:6px;color:#f0f4f7;white-space:nowrap}
.ar{font-family:"DejaVu Sans",sans-serif;font-size:11px;word-spacing:-1px}
.m1{margin-top:16px;letter-spacing:0}.l2{margin-top:18px}.m2{margin-top:16px}.m3{margin-top:23px}.l3{margin-top:18px}
.m3 .ar{font-size:10.800px}
.card{background:#262830;border-radius:8px;width:442px}
.checkpoint{height:94px;margin-top:10px;padding:8px}
.ckhead{display:flex;align-items:center;gap:7px;font-size:12px;height:18px;letter-spacing:.08px;color:#c2c8cc;padding-left:.5px}
.ckhead svg{fill:none;stroke:#4cbf6a;stroke-width:1.300}
.cktext{color:#f5f9fc;height:20px;line-height:20px;margin:6px 0;letter-spacing:.14px;white-space:nowrap}
.ckbtns{display:flex;gap:8px;font-size:12px}
.soft{height:28px;border-radius:4px;background:#2c2f39;justify-content:center;gap:5px;color:#c2c8cc;letter-spacing:.04px}
.s1{width:108px}.s2{width:80px}.s3{width:76px}
.tip{width:442px;height:140px;margin-top:14px;border:1px solid #00468c;border-radius:8px;background:linear-gradient(90deg,#142336,#1b1e28 85%);display:flex;padding:12px 14px 0 14px}
.tipbody{flex:1;margin-left:11px}
.tiphead{font-size:12px;line-height:18px;letter-spacing:.07px}
.tiptext{color:#f5f9fc;line-height:22.300px;margin-top:6px;letter-spacing:.1px;white-space:nowrap}
.tiptext span{letter-spacing:0}
.tipchev{margin-top:3px}
.m4{margin-top:19px;letter-spacing:-.1px}
.m4 .ar{font-size:10.700px}
.work{height:34px;margin-top:19px;display:flex;align-items:center;font-size:12px;padding:0 10px 0 8px;gap:9px;letter-spacing:.1px}
.work span{flex:1}
.composer{width:450px;height:75px;margin:22px 0 0 6px;border:1px solid #0f7bf5;border-radius:6px;background:#262830;padding:6px 6px 6px}
.draft{height:20px;line-height:20px;padding-left:3px;color:#e6eaee;white-space:nowrap}
.draft .ar{font-size:10.900px}
.tools{display:flex;align-items:center;margin-top:17px}
.build{width:80px;height:24px;border-radius:4px;background:#2c2f39;padding:0 7px 0 6px;gap:4px;font-size:13px;font-weight:500;letter-spacing:-.2px;color:#e0e5e9;margin-right:8.500px}
.build .c{margin-left:auto}
.clip{margin-left:13px}
.sliders{margin-left:auto;margin-right:13px}
.send{width:24px;height:24px;border-radius:4px;background:#0053a6;color:#dfeefc;justify-content:center}

.pane{flex:1;display:flex;flex-direction:column}
.ptabs{height:40px;display:flex;align-items:center;gap:4px}
.ptab{width:160px;height:28px;border-radius:6px;display:flex;align-items:center;padding:0 10px 0 6px;gap:7px;color:#9fa4ad;letter-spacing:.2px}
.ptab.on{background:#262830;color:#f5f9fc;font-weight:500;letter-spacing:0}
.ptab .px{margin-left:auto;stroke-width:.9;color:#8b8f98}
.ptab .con{color:#e5c34b}
.addt{margin-left:8px;color:#8b8f98}
.pright{margin-left:auto;display:flex;align-items:center;padding-right:13px;gap:11px}
.pright svg:nth-child(2){margin-left:6px}
.publish{width:74px;gap:5px;letter-spacing:-.35px}
.webview{width:1132px;height:693px;border:1px solid #3a3d49;border-radius:4px;overflow:hidden;display:flex;flex-direction:column}
.wbar{height:35px;display:flex;align-items:center;padding:0 8px 2px 9px;color:#8b8f98;flex:none}
.wbar>svg:nth-child(2){margin-left:17px}
.wbar>.lite{margin:0 8px 0 16px;color:#d5d9dd}
.waddr{width:880px;height:24px;border-radius:4px;background:#262830;display:flex;align-items:center;padding:1px 0 0 4px;gap:2px;margin-right:8px}
.waddr span{font-size:13px;letter-spacing:.05px;color:#a5aab2}
.waddr b{font-weight:400;color:#f5f9fc}
.pal{margin:0 9px 0 12px}
.theme{width:54px;color:#a5aab2;letter-spacing:.1px}
.theme + svg{margin-right:12px}

/* previewed site */
.page{flex:1;background:#f8fafc;font-family:Inter,sans-serif;color:#1d212b;display:flex;flex-direction:column}
.site{width:1116px;height:73px;background:#fff;border-bottom:1px solid #e2e8f0;display:flex;align-items:center;padding-left:31px;position:relative;z-index:1}
.g{width:32px;height:32px;border-radius:6px;background:#6b7c43;color:#fff;font-size:16px;font-weight:700;line-height:32px;text-align:center}
.brand{font-size:20px;font-weight:700;margin-left:8px;width:407px}
.links{display:flex;gap:32px;color:#64748b;font-size:16px;width:517.500px}
.user{width:32px;height:32px;border-radius:50%;background:#f1f4f6;font-size:14px;font-weight:500;line-height:33px;text-align:center;margin-right:28px}
.moon,.menu .i,.cta .i{stroke-width:2;stroke-linecap:round;stroke-linejoin:round}
.menu{position:absolute;left:804px;top:56px;width:224px;height:74px;background:#fff;border:1px solid #e2e8f0;border-radius:6px;box-shadow:0 4px 6px -1px rgba(0,0,0,.12);padding:4px}
.menu a{display:flex;align-items:center;height:32px;padding:0 0 1px 8px;gap:16px;font-size:14px;color:#2a2e38}
.hero{height:405px;background:radial-gradient(circle at 1px 1px,rgba(90,90,70,.06) 1px,transparent 1.500px) 40px 1px/40px 40px,linear-gradient(115deg,#fafbf5,#f9f9f8 35%,#fafafa 65%,#f9fbfc);display:flex;flex-direction:column;align-items:center;padding-right:15px;padding-top:80px}
.hero h1{width:896px;text-align:center;font-size:60px;line-height:60px;font-weight:700;background:linear-gradient(90deg,#647b4c,#1067bd 94%);-webkit-background-clip:text;background-clip:text;color:transparent;white-space:nowrap;padding-bottom:2px}
.hero p{width:672px;text-align:center;font-size:20px;line-height:28px;color:#64748b;margin-top:22px}
.cta{display:flex;gap:16px;margin-top:32px;font-size:18px;font-weight:500}
.cta a{height:44px;border-radius:6px;display:flex;align-items:center;padding-bottom:1px}
.primary{background:#6b7c43;color:#fff;width:254px;padding-left:32px;gap:16px}
.ghost{width:165px;border:1px solid #e2e8f0;background:#f9fafd;justify-content:center}
.features{padding:79px 15px 0 0;text-align:center}
.features h2{font-size:30px;line-height:36px;font-weight:700}
.features p{font-size:18px;line-height:28px;color:#64748b;margin-top:16px}

/* taskbar */
.taskbar{height:40px;flex:none;background:linear-gradient(90deg,#243a40,#22363f 50%,#1e3040 75%,#1a2644);display:flex;align-items:center;color:#fff;font:12px/16px "Open Sans","Noto Sans",sans-serif}
.tsys{width:48px;display:flex;justify-content:center}
.grip{width:4px;height:16px;border:solid #55666b;border-width:0 1px;margin:0 13px 0 6px}
.task{width:48px;height:40px;margin-right:1.100px;display:flex;justify-content:center;align-items:center}
.task svg{width:24px;height:24px}
.task.open{background:linear-gradient(#76b9ed,#76b9ed) 50% 100%/40px 2px no-repeat}
.task.current{background:#50646b;border-bottom:2px solid #76b9ed;padding-top:2px}
.tray{margin-left:auto;display:flex;align-items:center;height:40px}
.help{margin-right:61px}
.weather{margin-right:9px}
.temp{font-size:14px;width:37px;letter-spacing:-.6px}
.cond{font-size:13.700px;width:85px}
.t1{margin-right:11px}.t2{margin-right:8px}.t3{margin-right:8px}.t4{margin-right:18px}
.lang{width:30px;font-size:13px}
.clock{width:58px;font-size:12px;line-height:18px;letter-spacing:-.6px;text-align:center;margin-right:17px;white-space:nowrap}
.notif{position:relative;width:34px}
.notif b{position:absolute;left:7px;top:7px;width:17px;height:17px;border-radius:50%;background:#333;border:1px solid #888;font-size:10px;line-height:14px;text-align:center}
.desk{width:5px;height:40px;border-left:1px solid #8893a3}
```
